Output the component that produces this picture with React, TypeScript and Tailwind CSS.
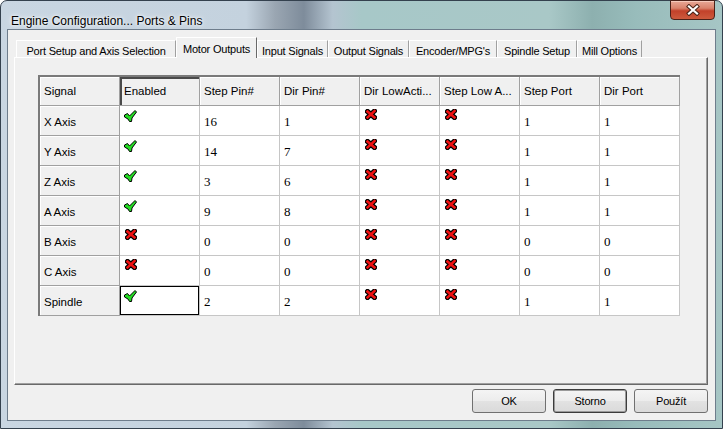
import React from 'react';

type Row = {
  name: string;
  enabled: boolean;
  stepPin: string;
  dirPin: string;
  stepPort: string;
  dirPort: string;
};

const rows: Row[] = [
  { name: 'X Axis', enabled: true, stepPin: '16', dirPin: '1', stepPort: '1', dirPort: '1' },
  { name: 'Y Axis', enabled: true, stepPin: '14', dirPin: '7', stepPort: '1', dirPort: '1' },
  { name: 'Z Axis', enabled: true, stepPin: '3', dirPin: '6', stepPort: '1', dirPort: '1' },
  { name: 'A Axis', enabled: true, stepPin: '9', dirPin: '8', stepPort: '1', dirPort: '1' },
  { name: 'B Axis', enabled: false, stepPin: '0', dirPin: '0', stepPort: '0', dirPort: '0' },
  { name: 'C Axis', enabled: false, stepPin: '0', dirPin: '0', stepPort: '0', dirPort: '0' },
  { name: 'Spindle', enabled: true, stepPin: '2', dirPin: '2', stepPort: '1', dirPort: '1' },
];

const tabs = [
  { label: 'Port Setup and Axis Selection', w: 'w-[160px]' },
  { label: 'Motor Outputs', w: 'w-[81px]', active: true },
  { label: 'Input Signals', w: 'w-[71px]' },
  { label: 'Output Signals', w: 'w-[81px]' },
  { label: "Encoder/MPG's", w: 'w-[88px]' },
  { label: 'Spindle Setup', w: 'w-[80px]' },
  { label: 'Mill Options', w: 'w-[65px]' },
];

const headers = ['Signal', 'Enabled', 'Step Pin#', 'Dir Pin#', 'Dir LowActi...', 'Step Low A...', 'Step Port', 'Dir Port'];

const sans = { fontFamily: '"Liberation Sans", Arial, sans-serif' };
const serif = { fontFamily: '"Liberation Serif", "Times New Roman", serif' };

function CheckIcon() {
  return (
    <svg width="13" height="12" viewBox="0 0 13 12" className="block">
      <path
        d="M0.5 5 L3.5 3.5 L5.5 6 L11 0.5 L12.5 2 L8 8 L7.5 11.5 L5.5 11.5 L4 9 L0.5 7 Z"
        fill="#22dd22"
        stroke="#000"
        strokeWidth="1"
      />
    </svg>
  );
}

function CrossIcon() {
  return (
    <svg width="12" height="11" viewBox="0 0 12 11" className="block">
      <g strokeLinecap="square">
        <path d="M2.5 2.5 L9.5 8.5 M9.5 2 L2.5 8.5" stroke="#000" strokeWidth="5" />
        <path d="M2.5 2.5 L9.5 8.5 M9.5 2 L2.5 8.5" stroke="#ee1111" strokeWidth="2.6" />
      </g>
    </svg>
  );
}

function HeaderCell({ text, active }: { text: string; active?: boolean }) {
  return (
    <div
      className={`flex items-center pl-[4px] pt-[1px] bg-[#f0f0f0] border-r border-b border-[#a0a0a0] text-[11.5px] text-black whitespace-nowrap overflow-hidden ${
        active ? 'shadow-[inset_2px_2px_0_#4a4a4a]' : 'shadow-[inset_1px_1px_0_#ffffff]'
      }`}
      style={sans}
    >
      {text}
    </div>
  );
}

function IconCell({ ok, focused }: { ok: boolean; focused?: boolean }) {
  return (
    <div
      className={`bg-white border-r border-b border-[#c6c6c6] ${
        ok ? 'pl-[4px] pt-[4px]' : 'pl-[5px] pt-[3px]'
      } ${focused ? 'shadow-[inset_0_0_0_1px_#000]' : ''}`}
    >
      {ok ? <CheckIcon /> : <CrossIcon />}
    </div>
  );
}

function NumCell({ value }: { value: string }) {
  return (
    <div
      className="flex items-center pl-[4px] pt-[2px] bg-white border-r border-b border-[#c6c6c6] text-[13px] text-black"
      style={serif}
    >
      {value}
    </div>
  );
}

function Button({ label, isDefault }: { label: string; isDefault?: boolean }) {
  return (
    <button
      className={`w-[74px] h-[24px] rounded-[3px] border text-[11px] tracking-[-0.2px] text-black bg-[linear-gradient(180deg,#f4f4f4_0%,#ececec_50%,#e2e2e2_51%,#dadada_100%)] ${
        isDefault ? 'border-[#3c3c3c] shadow-[inset_0_0_0_1px_#9a9a9a]' : 'border-[#707070]'
      }`}
      style={sans}
    >
      {label}
    </button>
  );
}

export default function App() {
  return (
    <div className="w-[723px] h-[429px] overflow-hidden bg-white">
      <div className="w-[723px] h-[429px] flex flex-col rounded-t-[7px] border border-[#34414e] px-[6px] pb-[7px] bg-[linear-gradient(90deg,#c9d6e2_0%,#c4d2de_34%,#9aa6b2_38%,#7e8c9b_42%,#b4c4d0_46%,#a7c8c8_50%,#a9c8c7_76%,#8db0af_82%,#98bcbb_88%,#a6c6c5_100%)]">
        {/* Title bar */}
        <div className="h-[28px] flex items-start shrink-0">
          <span
            className="pl-[4px] pt-[13px] text-[12px] leading-[14px] text-black [text-shadow:0_0_6px_#ffffff,0_0_3px_#ffffff]"
            style={sans}
          >
            Engine Configuration... Ports &amp; Pins
          </span>
          <div className="ml-auto mr-[1px] -mt-[1px] w-[45px] h-[20px] rounded-b-[4px] border border-[#4a2018] flex items-center justify-center bg-[linear-gradient(180deg,#e8a897_0%,#d9826c_40%,#c2412a_55%,#cd5a3d_100%)] shadow-[inset_0_1px_0_#f5c9bb]">
            <svg width="14" height="12" viewBox="0 0 14 12">
              <g strokeLinecap="square">
                <path d="M3 2.5 L11 9.5 M11 2.5 L3 9.5" stroke="#4b2418" strokeWidth="4.2" />
                <path d="M3 2.5 L11 9.5 M11 2.5 L3 9.5" stroke="#ffffff" strokeWidth="2.2" />
              </g>
            </svg>
          </div>
        </div>

        {/* Client area */}
        <div className="flex-1 flex flex-col bg-[#f0f0f0] border border-[#6e7d8c]">
          {/* Tab strip */}
          <div className="mt-[7px] h-[20px] pl-[8px] flex items-end">
            {tabs.map((t) =>
              t.active ? (
                <div
                  key={t.label}
                  className={`${t.w} h-[21px] -mb-[1px] relative z-10 flex justify-center pt-[3px] bg-[#f0f0f0] border-t border-l border-white border-r border-r-[#696969] text-[11px] tracking-[-0.2px] text-black whitespace-nowrap`}
                  style={sans}
                >
                  {t.label}
                </div>
              ) : (
                <div
                  key={t.label}
                  className={`${t.w} h-[17px] flex justify-center pt-[2px] bg-[#f0f0f0] border-t border-l border-white border-r border-r-[#a0a0a0] text-[11px] tracking-[-0.2px] text-black whitespace-nowrap`}
                  style={sans}
                >
                  {t.label}
                </div>
              )
            )}
          </div>

          {/* Tab panel */}
          <div className="ml-[6px] mr-[7px] h-[328px] border-t border-l border-white border-r border-b border-r-[#696969] border-b-[#696969] shadow-[inset_-1px_-1px_0_#a0a0a0] bg-[#f0f0f0]">
            <div className="ml-[23px] mt-[17px] w-[642px] border-t-2 border-l-2 border-[#7a7a7a] grid grid-cols-[repeat(8,80px)] grid-rows-[29px_repeat(7,30px)]">
              {headers.map((h, i) => (
                <HeaderCell key={h} text={h} active={i === 1} />
              ))}
              {rows.map((r) => (
                <React.Fragment key={r.name}>
                  <div
                    className="flex items-center pl-[4px] pt-[4px] bg-[#f0f0f0] border-r border-b border-[#a0a0a0] text-[11.5px] text-black shadow-[inset_1px_1px_0_#ffffff]"
                    style={sans}
                  >
                    {r.name}
                  </div>
                  <IconCell ok={r.enabled} focused={r.name === 'Spindle'} />
                  <NumCell value={r.stepPin} />
                  <NumCell value={r.dirPin} />
                  <IconCell ok={false} />
                  <IconCell ok={false} />
                  <NumCell value={r.stepPort} />
                  <NumCell value={r.dirPort} />
                </React.Fragment>
              ))}
            </div>
          </div>

          {/* Buttons */}
          <div className="mt-[4px] mr-[7px] flex justify-end gap-[7px]">
            <Button label="OK" />
            <Button label="Storno" isDefault />
            <Button label="Použít" />
          </div>
        </div>
      </div>
    </div>
  );
}
